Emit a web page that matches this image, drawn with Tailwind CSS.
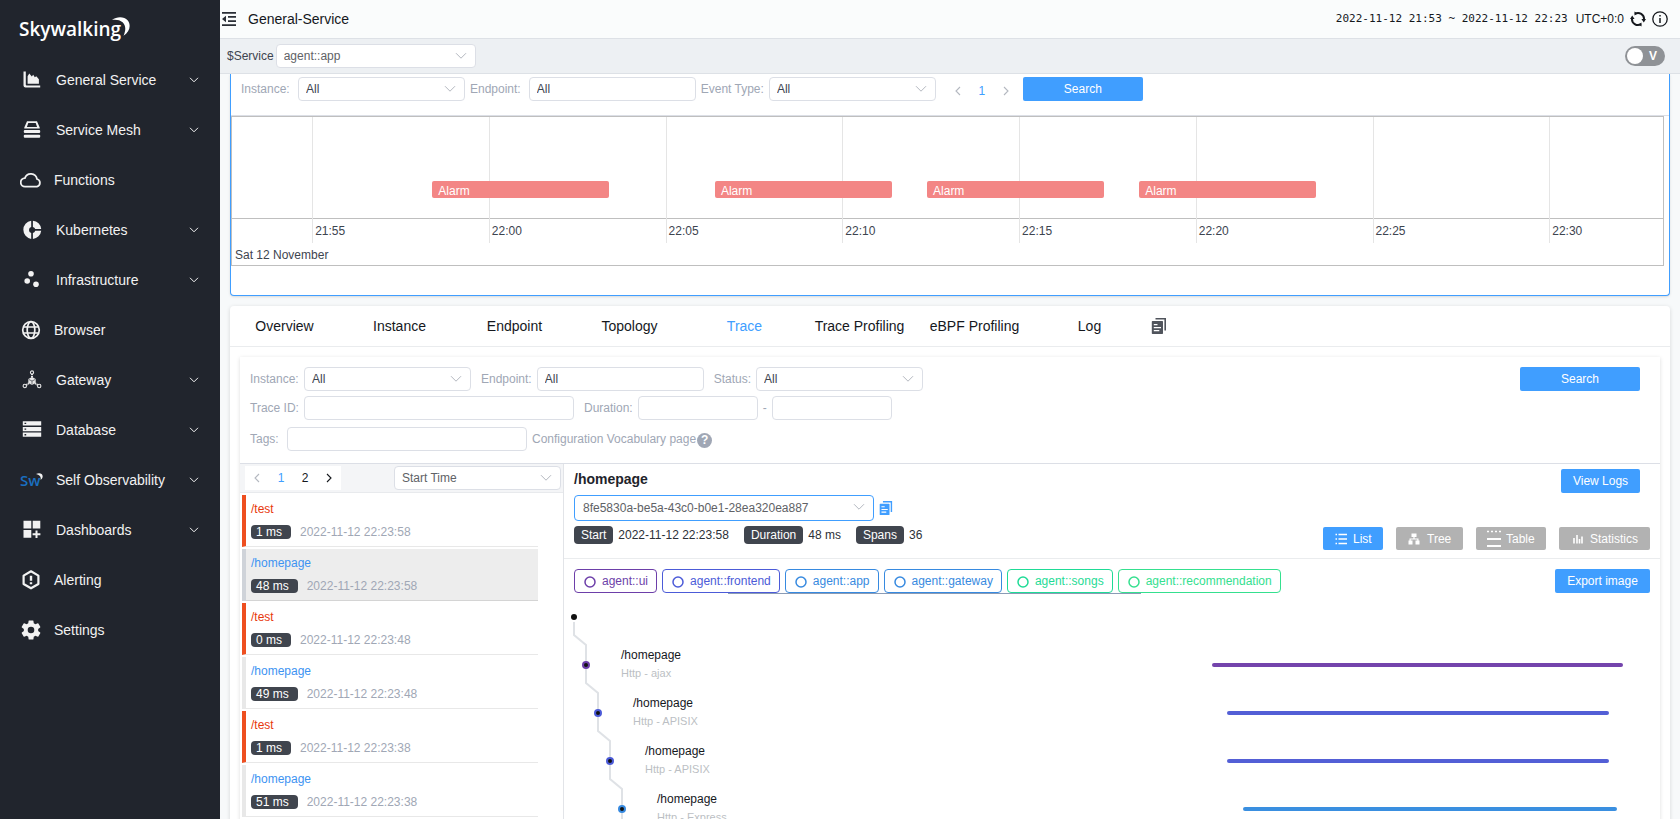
<!DOCTYPE html>
<html lang="en">
<head>
<meta charset="utf-8">
<title>General-Service</title>
<script src="https://cdn.jsdelivr.net/npm/@tailwindcss/browser@4"></script>
</head>
<body class="flex h-screen overflow-hidden bg-[#f7f9fa] font-['Liberation_Sans',Arial,sans-serif] text-xs text-[#3d444f]">

<svg class="hidden">
  <symbol id="down" viewBox="0 0 12 8"><path d="M1 1.200l5 5 5-5" fill="none" stroke="currentColor" stroke-width="1"/></symbol>
  <symbol id="menudown" viewBox="0 0 10 6"><path d="M1 .8l4 4 4-4" fill="none" stroke="currentColor" stroke-width="1"/></symbol>
  <symbol id="prev" viewBox="0 0 8 12"><path d="M6 2L2 6l4 4" fill="none" stroke="currentColor" stroke-width="1.100"/></symbol>
  <symbol id="next" viewBox="0 0 8 12"><path d="M2 2l4 4-4 4" fill="none" stroke="currentColor" stroke-width="1.100"/></symbol>
  <symbol id="copy" viewBox="0 0 16 18"><path d="M4.500 1H15v12.500h-1.600V2.600H4.500z" fill="currentColor"/><path fill-rule="evenodd" d="M1.500 4h9.800q.7 0 .7.700v11.600q0 .7-.7.700H1.500q-.7 0-.7-.7V4.700q0-.7.7-.7zM2.800 7v1.200h3.700V7zm0 3v1.300h7.200V10zm0 3v1.300h5.500V13z" fill="currentColor"/></symbol>
</svg>

<nav class="flex w-[220px] shrink-0 flex-col bg-[#21252d] text-sm text-[#f2f2f2]">
  <a href="#" aria-label="Skywalking" class="relative flex h-[55px] items-center pt-1 pl-[19px] font-['Open_Sans',sans-serif] text-[19px] font-semibold text-white">Skywalking
    <svg class="absolute top-4 left-[111px] size-5" viewBox="0 0 20 20"><path d="M1 4C6 .2 13 .2 16.800 4.500c3.600 4.700 1.800 11.500-4.300 15.200C15 14.500 15 9.500 11.600 6.300 9 4 5 3.400 1 4z" fill="#fff"/></svg>
  </a>
  <a href="#" class="flex h-[50px] items-center pr-[21px] pl-[22px]"><svg class="mr-[14px] size-5" viewBox="0 0 20 20" fill="#f2f2f2"><path d="M1.500 1.500h2.300v13.300q0 .8.900.8h13.500v2H3.600q-2.100 0-2.100-2z"/><path d="M5.600 13.800V6.200l1.700-2.700 2.500 3 1.400-1.700 1.600 2.500 1.500-1 2.600 3v4.500z"/></svg><span class="flex-1">General Service</span><svg class="h-[6px] w-[10px]"><use href="#menudown"/></svg></a>
  <a href="#" class="flex h-[50px] items-center pr-[21px] pl-[22px]"><svg class="mr-[14px] size-5" viewBox="0 0 20 20" fill="#f2f2f2"><path fill-rule="evenodd" d="M5 1.200h10l2.700 6.300v1H2.300v-1zM6.300 2.900L4.900 6.900h10.200l-1.400-4z"/><rect x="1.800" y="10" width="16.400" height="3" rx="1"/><rect x="1.800" y="14.700" width="16.400" height="3" rx="1"/></svg><span class="flex-1">Service Mesh</span><svg class="h-[6px] w-[10px]"><use href="#menudown"/></svg></a>
  <a href="#" class="flex h-[50px] items-center pr-5 pl-5"><svg class="mr-3 h-5 w-[22px]" viewBox="0 0 22 20"><path d="M5.200 16.700a4.300 4.300 0 0 1-.3-8.600A6.300 6.300 0 0 1 17 9a4 4 0 0 1 0 7.700z" fill="none" stroke="#f2f2f2" stroke-width="1.800"/></svg>Functions</a>
  <a href="#" class="flex h-[50px] items-center pr-[21px] pl-[22px]"><svg class="mr-[14px] size-5" viewBox="0 0 20 20" fill="#f2f2f2"><path d="M9.200.7a9.200 9.200 0 0 0 0 18.200V13a3.200 3.200 0 0 1 0-6.100zM10.900.7v6.200q1.800.5 2.300 2.100h6A9.200 9.200 0 0 0 10.900.7zM10.900 18.900V13q1.800-.5 2.300-2.300h6a9.200 9.200 0 0 1-8.300 8.200z"/></svg><span class="flex-1">Kubernetes</span><svg class="h-[6px] w-[10px]"><use href="#menudown"/></svg></a>
  <a href="#" class="flex h-[50px] items-center pr-[21px] pl-[22px]"><svg class="mr-[14px] size-5" viewBox="0 0 20 20" fill="#f2f2f2"><circle cx="9" cy="3.700" r="2.800"/><circle cx="5.200" cy="11" r="2.800"/><circle cx="14" cy="14.300" r="2.800"/></svg><span class="flex-1">Infrastructure</span><svg class="h-[6px] w-[10px]"><use href="#menudown"/></svg></a>
  <a href="#" class="flex h-[50px] items-center pr-5 pl-[21px]"><svg class="mr-[13px] size-5" viewBox="0 0 20 20" fill="none" stroke="#f2f2f2" stroke-width="1.700"><circle cx="10" cy="10" r="8.300"/><ellipse cx="10" cy="10" rx="3.800" ry="8.300"/><path d="M2.500 7h15M2.500 13h15"/></svg>Browser</a>
  <a href="#" class="flex h-[50px] items-center pr-[21px] pl-[22px]"><svg class="mr-[14px] size-5" viewBox="0 0 20 20" fill="none" stroke="#e6e6e6" stroke-width="1.100"><circle cx="10" cy="2.500" r="1.600"/><circle cx="2.800" cy="16" r="1.700"/><circle cx="17.200" cy="16" r="1.700"/><path d="M10 4v4M4.300 15l3-2M15.700 15l-3-2" stroke-width="2" stroke-dasharray="1.300 .6"/><path d="M10 7l3.700 2v4L10 15l-3.700-2V9z" fill="#e6e6e6" stroke="none"/><path d="M6.800 9.500L10 11l3.200-1.500M10 11v3.500" stroke="#21252d" stroke-width=".6"/></svg><span class="flex-1">Gateway</span><svg class="h-[6px] w-[10px]"><use href="#menudown"/></svg></a>
  <a href="#" class="flex h-[50px] items-center pr-[21px] pl-[22px]"><svg class="mr-[14px] size-5" viewBox="0 0 20 20"><path d="M.8 1.200h18.400v4.300H.8zM.8 6.900h18.400v4.300H.8zM.8 12.500h18.400v4.300H.8z" fill="#f2f2f2"/><path d="M2.500 2.700h1.700v1.400H2.500zM2.500 8.400h1.700v1.400H2.500zM2.500 14h1.700v1.400H2.500z" fill="#21252d"/></svg><span class="flex-1">Database</span><svg class="h-[6px] w-[10px]"><use href="#menudown"/></svg></a>
  <a href="#" class="flex h-[50px] items-center pr-[21px] pl-5"><span class="relative w-9 font-['Open_Sans',sans-serif] text-[15px] leading-5 font-semibold text-[#1a6fc0]">Sw<svg class="absolute top-[3px] left-[16px] size-[7px]" viewBox="0 0 10 10"><path d="M0 1.500C5-1 10 1 9.500 5.500 9 8 8 9 6.500 10 7.500 6 6 3 0 1.500z" fill="#f2f2f2"/></svg></span><span class="flex-1">Self Observability</span><svg class="h-[6px] w-[10px]"><use href="#menudown"/></svg></a>
  <a href="#" class="flex h-[50px] items-center pr-[21px] pl-[22px]"><svg class="mr-[14px] size-5" viewBox="0 0 20 20" fill="#f2f2f2"><path d="M1.500.8h7.800v7.800H1.500zM10.700.8h7.600v7.800h-7.600zM1.500 10h7.800v7.800H1.500zM13.500 10.500h2v2.800h2.900v2h-2.900v2.800h-2v-2.800h-2.900v-2h2.900z"/></svg><span class="flex-1">Dashboards</span><svg class="h-[6px] w-[10px]"><use href="#menudown"/></svg></a>
  <a href="#" class="flex h-[50px] items-center pr-5 pl-[21px]"><svg class="mr-[13px] size-5" viewBox="0 0 20 20" fill="none" stroke="#f2f2f2"><path d="M10 1.300l7.400 4.300v8.400L10 18.300l-7.400-4.300V5.600z" stroke-width="2.200" stroke-linejoin="round"/><path d="M10 5.800v5M10 12.300v2" stroke-width="2.400"/></svg>Alerting</a>
  <a href="#" class="flex h-[50px] items-center pr-5 pl-[21px]"><svg class="mr-[13px] size-5" viewBox="2 2 20 20" fill="#f2f2f2"><path d="M19.140 12.940c.04-.3.060-.61.060-.94 0-.32-.02-.64-.07-.94l2.030-1.580a.49.490 0 0 0 .12-.61l-1.920-3.320a.49.490 0 0 0-.59-.22l-2.390.96a7 7 0 0 0-1.620-.94l-.36-2.540a.48.480 0 0 0-.48-.41h-3.840a.48.480 0 0 0-.47.410l-.36 2.540a7 7 0 0 0-1.620.94l-2.390-.96a.48.480 0 0 0-.59.220L2.740 8.870a.48.480 0 0 0 .12.610l2.030 1.580a6 6 0 0 0 0 1.880l-2.030 1.580a.49.490 0 0 0-.12.610l1.920 3.320c.12.220.37.290.59.220l2.390-.96c.5.380 1.030.7 1.620.94l.36 2.540c.05.240.24.410.48.410h3.840c.24 0 .44-.17.470-.41l.36-2.540a7 7 0 0 0 1.620-.94l2.390.96c.22.080.47 0 .59-.22l1.920-3.320a.48.480 0 0 0-.12-.61zM12 15.300a3.300 3.300 0 1 1 0-6.600 3.300 3.300 0 0 1 0 6.600z"/></svg>Settings</a>
</nav>

<div class="flex min-w-0 flex-1 flex-col">
  <header class="flex h-[38px] shrink-0 items-center bg-[#fafcfc] pr-3 pl-[2px] text-[#15181d]">
    <button aria-label="Collapse menu" class="mr-3"><svg class="size-[14px]" viewBox="0 0 14 14"><path d="M0 0h14v1.700H0zM6 4.100h8v1.700H6zM6 8.200h8v1.700H6zM0 12.300h14V14H0zM4 3.700v6.600L0 7z" fill="#2a2e36"/></svg></button>
    <h1 class="flex-1 text-sm">General-Service</h1>
    <span class="mr-2 font-['DejaVu_Sans_Mono',monospace] text-[11px]">2022-11-12 21:53 ~ 2022-11-12 22:23</span>
    <span>UTC+0:0</span>
    <button aria-label="Reload" class="mx-[6px]"><svg class="size-4" viewBox="0 0 16 16" fill="none" stroke="#15181d" stroke-width="2"><path d="M5 2.800A6 6 0 0 1 14 8.500M11 13.200A6 6 0 0 1 2 7.500"/><path d="M11.400 8H16L13.800 11.500zM0 8h4.600L2.200 4.500zM4.500.5v4L7.500 2.500zM11.500 15.500v-4L8.500 13.500z" fill="#15181d" stroke="none"/></svg></button>
    <button aria-label="About"><svg class="size-4" viewBox="0 0 16 16" fill="none" stroke="#15181d" stroke-width="1.300"><circle cx="8" cy="8" r="7.200"/><path d="M8 7v5M8 4v1.600" stroke-width="1.500"/></svg></button>
  </header>

  <div class="flex h-9 shrink-0 items-center border-y border-[#dde1e6] bg-[#edf0f3] pr-[15px] pl-[7px]">
    <label for="svc" class="mr-[2px]">$Service</label>
    <span class="relative"><select id="svc" class="block h-6 w-[200px] appearance-none rounded-sm border border-[#dcdfe6] bg-white pl-[7px] text-[#606266]"><option>agent::app</option></select><svg class="pointer-events-none absolute top-2 right-[9px] h-2 w-3 text-[#b4b8c0]"><use href="#down"/></svg></span>
    <label class="relative ml-auto flex h-5 w-10 items-center rounded-full bg-[#8f9296] p-[2px] text-xs font-bold text-white"><input type="checkbox" aria-label="View mode" class="size-4 appearance-none rounded-full bg-white"><span class="ml-[6px]">V</span></label>
  </div>

  <main class="flex-1 overflow-hidden pr-[10px] pl-[10px]">
    <section class="rounded-b-sm border-x border-b border-[#409eff] bg-white shadow-sm">
      <div class="flex h-[42px] items-start gap-[5px] border-b border-[#dcdfe6] pt-[3px] pl-[10px] text-[#a0a7b5]">
        <label for="ev-inst" class="mr-[3px] w-[49px] leading-6">Instance:</label>
        <span class="relative"><select id="ev-inst" class="block h-6 w-[167px] appearance-none rounded-sm border border-[#dcdfe6] bg-white pl-[7px] text-[#3d444f]"><option>All</option></select><svg class="pointer-events-none absolute top-2 right-[9px] h-2 w-3 text-[#b4b8c0]"><use href="#down"/></svg></span>
        <label for="ev-end" class="mr-[3px] leading-6">Endpoint:</label>
        <input id="ev-end" value="All" class="h-6 w-[167px] rounded-sm border border-[#dcdfe6] pl-[7px] text-[#3d444f]">
        <label for="ev-type" class="leading-6">Event Type:</label>
        <span class="relative"><select id="ev-type" class="block h-6 w-[167px] appearance-none rounded-sm border border-[#dcdfe6] bg-white pl-[7px] text-[#3d444f]"><option>All</option></select><svg class="pointer-events-none absolute top-2 right-[9px] h-2 w-3 text-[#b4b8c0]"><use href="#down"/></svg></span>
        <span class="ml-[5px] flex h-7 items-center">
          <button aria-label="Previous" class="flex w-6 justify-center text-[#b4b8c0]"><svg class="h-3 w-2"><use href="#prev"/></svg></button>
          <button class="w-6 text-[#409eff]">1</button>
          <button aria-label="Next" class="flex w-6 justify-center text-[#b4b8c0]"><svg class="h-3 w-2"><use href="#next"/></svg></button>
        </span>
        <button class="h-6 w-[120px] rounded-xs bg-[#409eff] text-white">Search</button>
      </div>
      <!-- Event timeline: positions are percentages of the visible time window -->
      <div class="mr-[5px] mb-[29px] border border-[#bfbfbf]">
        <div class="relative h-[148px] overflow-hidden">
          <div class="h-[102px] border-b border-[#bfbfbf]"></div>
          <div class="absolute top-0 h-[126px] border-l border-[#e5e5e5]" style="left:5.600%"><span class="block pt-[106px] pl-[2px] leading-4">21:55</span></div>
          <div class="absolute top-0 h-[126px] border-l border-[#e5e5e5]" style="left:17.950%"><span class="block pt-[106px] pl-[2px] leading-4">22:00</span></div>
          <div class="absolute top-0 h-[126px] border-l border-[#e5e5e5]" style="left:30.300%"><span class="block pt-[106px] pl-[2px] leading-4">22:05</span></div>
          <div class="absolute top-0 h-[126px] border-l border-[#e5e5e5]" style="left:42.650%"><span class="block pt-[106px] pl-[2px] leading-4">22:10</span></div>
          <div class="absolute top-0 h-[126px] border-l border-[#e5e5e5]" style="left:55%"><span class="block pt-[106px] pl-[2px] leading-4">22:15</span></div>
          <div class="absolute top-0 h-[126px] border-l border-[#e5e5e5]" style="left:67.350%"><span class="block pt-[106px] pl-[2px] leading-4">22:20</span></div>
          <div class="absolute top-0 h-[126px] border-l border-[#e5e5e5]" style="left:79.700%"><span class="block pt-[106px] pl-[2px] leading-4">22:25</span></div>
          <div class="absolute top-0 h-[126px] border-l border-[#e5e5e5]" style="left:92.050%"><span class="block pt-[106px] pl-[2px] leading-4">22:30</span></div>
          <div class="absolute top-16 h-[17px] rounded-xs bg-[#f38685] pl-[6px] leading-5 text-white" style="left:14%;width:12.350%">Alarm</div>
          <div class="absolute top-16 h-[17px] rounded-xs bg-[#f38685] pl-[6px] leading-5 text-white" style="left:33.750%;width:12.350%">Alarm</div>
          <div class="absolute top-16 h-[17px] rounded-xs bg-[#f38685] pl-[6px] leading-5 text-white" style="left:48.570%;width:12.350%">Alarm</div>
          <div class="absolute top-16 h-[17px] rounded-xs bg-[#f38685] pl-[6px] leading-5 text-white" style="left:63.400%;width:12.350%">Alarm</div>
          <span class="absolute top-[130px] left-[3px] leading-4">Sat 12 November</span>
        </div>
      </div>
    </section>

    <section class="mt-[10px] flex h-[600px] flex-col rounded-sm bg-white shadow-[0_1px_4px_rgba(0,0,0,0.14)]">
      <div class="flex h-[41px] shrink-0 items-center border-b border-[#eaecee] text-sm whitespace-nowrap text-[#15181d]">
        <a href="#" class="-ml-[3px] w-[115px] text-center">Overview</a>
        <a href="#" class="w-[115px] text-center">Instance</a>
        <a href="#" class="w-[115px] text-center">Endpoint</a>
        <a href="#" class="w-[115px] text-center">Topology</a>
        <a href="#" class="w-[115px] text-center text-[#409eff]">Trace</a>
        <a href="#" class="w-[115px] text-center">Trace Profiling</a>
        <a href="#" class="w-[115px] text-center">eBPF Profiling</a>
        <a href="#" class="w-[115px] text-center">Log</a>
        <button aria-label="Copy" class="ml-1 text-[#50545c]"><svg class="h-[18px] w-4"><use href="#copy"/></svg></button>
      </div>

      <div class="mx-[10px] mt-[10px] flex flex-1 flex-col bg-white shadow-[0_1px_4px_rgba(0,0,0,0.14)]">
        <form class="flex h-[107px] shrink-0 flex-col border-b border-[#dcdfe6] pt-[10px] pr-5 pl-[10px] text-[#a0a7b5]" onsubmit="return false">
          <div class="flex items-center">
            <label for="t-inst" class="w-[54px]">Instance:</label>
            <span class="relative"><select id="t-inst" class="block h-6 w-[167px] appearance-none rounded-sm border border-[#dcdfe6] bg-white pl-[7px] text-[#3d444f]"><option>All</option></select><svg class="pointer-events-none absolute top-2 right-[9px] h-2 w-3 text-[#b4b8c0]"><use href="#down"/></svg></span>
            <label for="t-end" class="mr-[5px] ml-[10px]">Endpoint:</label>
            <input id="t-end" value="All" class="h-6 w-[167px] rounded-sm border border-[#dcdfe6] pl-[7px] text-[#3d444f]">
            <label for="t-status" class="mr-[5px] ml-[10px]">Status:</label>
            <span class="relative"><select id="t-status" class="block h-6 w-[167px] appearance-none rounded-sm border border-[#dcdfe6] bg-white pl-[7px] text-[#3d444f]"><option>All</option></select><svg class="pointer-events-none absolute top-2 right-[9px] h-2 w-3 text-[#b4b8c0]"><use href="#down"/></svg></span>
            <button class="ml-auto h-6 w-[120px] rounded-xs bg-[#409eff] text-white">Search</button>
          </div>
          <div class="mt-[5px] flex items-center">
            <label for="t-id" class="w-[54px]">Trace ID:</label>
            <input id="t-id" class="h-6 w-[270px] rounded-sm border border-[#dcdfe6]">
            <label for="t-dur" class="mr-[5px] ml-[10px]">Duration:</label>
            <input id="t-dur" class="h-6 w-[120px] rounded-sm border border-[#dcdfe6]">
            <span class="mx-[5px]">-</span>
            <input aria-label="Maximum duration" class="h-6 w-[120px] rounded-sm border border-[#dcdfe6]">
          </div>
          <div class="mt-[7px] flex items-center">
            <label for="t-tags" class="w-[37px]">Tags:</label>
            <input id="t-tags" class="h-6 w-[240px] rounded-sm border border-[#dcdfe6]">
            <a href="#" class="ml-[5px] flex items-center gap-px">Configuration Vocabulary page<span class="mt-[2px] flex size-[15px] items-center justify-center rounded-full bg-[#a0a7b5] font-bold text-white">?</span></a>
          </div>
        </form>

        <div class="flex flex-1">
          <div class="w-[324px] shrink-0 border-r border-[#e2e4e8]">
            <div class="flex h-[29px] items-center justify-between border-b border-[#e8eaed] bg-[#f4f5f7] pr-[2px] pl-[5px]">
              <span class="flex h-6 items-center bg-white text-[#15181d]">
                <button aria-label="Previous" class="flex w-6 justify-center text-[#b4b8c0]"><svg class="h-3 w-2"><use href="#prev"/></svg></button>
                <button class="w-6 text-[#409eff]">1</button>
                <button class="w-6">2</button>
                <button aria-label="Next" class="flex w-6 justify-center"><svg class="h-3 w-2"><use href="#next"/></svg></button>
              </span>
              <span class="relative"><select aria-label="Sort order" class="block h-6 w-[167px] appearance-none rounded-sm border border-[#dcdfe6] bg-white pl-[7px] text-[#606266]"><option>Start Time</option></select><svg class="pointer-events-none absolute top-2 right-[9px] h-2 w-3 text-[#b4b8c0]"><use href="#down"/></svg></span>
            </div>
            <ul class="mt-[2px] ml-[2px] flex w-[296px] flex-col gap-[2px]">
              <li class="h-[52px] border-b border-l-4 border-b-[#e8e8e8] border-l-[#ee4f20] pt-[5px] pl-[5px]"><a href="#" class="block leading-[18px] text-[#e8380d]">/test</a><div class="mt-[7px] flex items-center leading-[14px]"><span class="rounded-sm bg-[#40454e] pr-[9px] pl-[5px] text-white">1 ms</span><span class="ml-[9px] text-[#a0a7b5]">2022-11-12 22:23:58</span></div></li>
              <li class="h-[52px] border-b border-l-4 border-b-[#d4d4d4] border-l-[#cfd3d9] bg-[#ededed] pt-[5px] pl-[5px]"><a href="#" class="block leading-[18px] text-[#3d93f2]">/homepage</a><div class="mt-[7px] flex items-center leading-[14px]"><span class="rounded-sm bg-[#40454e] pr-[9px] pl-[5px] text-white">48 ms</span><span class="ml-[9px] text-[#a0a7b5]">2022-11-12 22:23:58</span></div></li>
              <li class="h-[52px] border-b border-l-4 border-b-[#e8e8e8] border-l-[#ee4f20] pt-[5px] pl-[5px]"><a href="#" class="block leading-[18px] text-[#e8380d]">/test</a><div class="mt-[7px] flex items-center leading-[14px]"><span class="rounded-sm bg-[#40454e] pr-[9px] pl-[5px] text-white">0 ms</span><span class="ml-[9px] text-[#a0a7b5]">2022-11-12 22:23:48</span></div></li>
              <li class="h-[52px] border-b border-l-4 border-b-[#e8e8e8] border-l-[#e8e8e8] pt-[5px] pl-[5px]"><a href="#" class="block leading-[18px] text-[#3d93f2]">/homepage</a><div class="mt-[7px] flex items-center leading-[14px]"><span class="rounded-sm bg-[#40454e] pr-[9px] pl-[5px] text-white">49 ms</span><span class="ml-[9px] text-[#a0a7b5]">2022-11-12 22:23:48</span></div></li>
              <li class="h-[52px] border-b border-l-4 border-b-[#e8e8e8] border-l-[#ee4f20] pt-[5px] pl-[5px]"><a href="#" class="block leading-[18px] text-[#e8380d]">/test</a><div class="mt-[7px] flex items-center leading-[14px]"><span class="rounded-sm bg-[#40454e] pr-[9px] pl-[5px] text-white">1 ms</span><span class="ml-[9px] text-[#a0a7b5]">2022-11-12 22:23:38</span></div></li>
              <li class="h-[52px] border-b border-l-4 border-b-[#e8e8e8] border-l-[#e8e8e8] pt-[5px] pl-[5px]"><a href="#" class="block leading-[18px] text-[#3d93f2]">/homepage</a><div class="mt-[7px] flex items-center leading-[14px]"><span class="rounded-sm bg-[#40454e] pr-[9px] pl-[5px] text-white">51 ms</span><span class="ml-[9px] text-[#a0a7b5]">2022-11-12 22:23:38</span></div></li>
            </ul>
          </div>

          <div class="min-w-0 flex-1">
            <div class="border-b border-[#eaecee] pt-[5px] pr-[10px] pb-2 pl-[10px]">
              <div class="flex items-start justify-between pr-[10px]">
                <h2 class="text-sm leading-5 font-bold text-[#1f242b]">/homepage</h2>
                <button class="h-6 w-[79px] rounded-xs bg-[#409eff] text-white">View Logs</button>
              </div>
              <div class="mt-[2px] flex items-center">
                <span class="relative"><select aria-label="Trace ID" class="block h-[26px] w-[300px] appearance-none rounded-sm border border-[#409eff] bg-white pl-2 text-[#606266]"><option>8fe5830a-be5a-43c0-b0e1-28ea320ea887</option></select><svg class="pointer-events-none absolute top-2 right-[9px] h-2 w-3 text-[#b4b8c0]"><use href="#down"/></svg></span>
                <button aria-label="Copy trace ID" class="ml-[5px] text-[#409eff]"><svg class="h-4 w-[14px]"><use href="#copy"/></svg></button>
              </div>
              <div class="mt-[5px] flex items-start leading-[18px] text-[#2c3037]">
                <span class="mr-[5px] rounded-sm bg-[#40454e] px-[7px] text-white">Start</span>2022-11-12 22:23:58
                <span class="mr-[5px] ml-[15px] rounded-sm bg-[#40454e] px-[7px] text-white">Duration</span>48 ms
                <span class="mr-[5px] ml-[15px] rounded-sm bg-[#40454e] px-[7px] text-white">Spans</span>36
                <div class="mt-px ml-auto flex gap-[13px] text-white">
                  <button class="flex h-[23px] w-[60px] items-center rounded-xs bg-[#409eff] pl-3"><svg class="mr-[6px] size-3" viewBox="0 0 12 12"><path d="M3.500 1.500H12M3.500 6H12M3.500 10.500H12M.5 1.500H2M.5 6H2M.5 10.500H2" stroke="#fff" stroke-width="1.300"/></svg>List</button>
                  <button class="flex h-[23px] w-[67px] items-center rounded-xs bg-[#b2b2b2] pl-3"><svg class="mr-[7px] size-3" viewBox="0 0 12 12" fill="#fff"><path d="M3.500.5h5v3.500h-5zM5.400 4h1.200v1.500h3.900V8H9.300V6.600H2.700V8H1.500V5.500h3.900zM.5 7.500h4V11.500h-4zM7.500 7.500h4V11.500h-4z"/></svg>Tree</button>
                  <button class="flex h-[23px] w-[70px] items-center rounded-xs bg-[#b2b2b2] pl-[11px]"><svg class="mr-[5px] h-[18px] w-[14px]" viewBox="0 0 14 18" stroke="#fff"><path d="M0 1.500h14" stroke-width="1.500" stroke-dasharray="2 2"/><path d="M0 9h14M0 16h14" stroke-width="2"/></svg>Table</button>
                  <button class="flex h-[23px] w-[91px] items-center rounded-xs bg-[#b2b2b2] pl-[14px]"><svg class="mr-[7px] size-[10px]" viewBox="0 0 10 10"><path d="M1 4v5.500M4 1v8.500M6.500 5v4.500M9 2.500v7" stroke="#fff" stroke-width="1.600"/></svg>Statistics</button>
                </div>
              </div>
            </div>

            <div class="pt-px pr-[10px] pl-[10px]">
              <div class="relative flex items-center gap-[5px] pt-[9px]">
                <span class="flex h-6 items-center gap-[6px] rounded-sm border border-[#6d3fa9] pr-2 pl-[9px] text-[#6d3fa9]"><svg class="mt-px size-3" viewBox="0 0 12 12"><circle cx="6" cy="6" r="5" fill="none" stroke="currentColor" stroke-width="1.500"/></svg>agent::ui</span>
                <span class="flex h-6 items-center gap-[6px] rounded-sm border border-[#4c5bd8] pr-2 pl-[9px] text-[#4c5bd8]"><svg class="mt-px size-3" viewBox="0 0 12 12"><circle cx="6" cy="6" r="5" fill="none" stroke="currentColor" stroke-width="1.500"/></svg>agent::frontend</span>
                <span class="flex h-6 items-center gap-[6px] rounded-sm border border-[#378ae0] pr-2 pl-[9px] text-[#378ae0]"><svg class="mt-px size-3" viewBox="0 0 12 12"><circle cx="6" cy="6" r="5" fill="none" stroke="currentColor" stroke-width="1.500"/></svg>agent::app</span>
                <span class="flex h-6 items-center gap-[6px] rounded-sm border border-[#378ae0] pr-2 pl-[9px] text-[#378ae0]"><svg class="mt-px size-3" viewBox="0 0 12 12"><circle cx="6" cy="6" r="5" fill="none" stroke="currentColor" stroke-width="1.500"/></svg>agent::gateway</span>
                <span class="flex h-6 items-center gap-[6px] rounded-sm border border-[#1fdb96] pr-2 pl-[9px] text-[#1fdb96]"><svg class="mt-px size-3" viewBox="0 0 12 12"><circle cx="6" cy="6" r="5" fill="none" stroke="currentColor" stroke-width="1.500"/></svg>agent::songs</span>
                <span class="flex h-6 items-center gap-[6px] rounded-sm border border-[#35e08f] pr-2 pl-[9px] text-[#35e08f]"><svg class="mt-px size-3" viewBox="0 0 12 12"><circle cx="6" cy="6" r="5" fill="none" stroke="currentColor" stroke-width="1.500"/></svg>agent::recommendation</span>
                <span class="absolute top-full left-[154px] h-px w-[413px] bg-[#8a9bb5]"></span>
                <button class="ml-auto h-6 w-[95px] rounded-xs bg-[#409eff] text-white">Export image</button>
              </div>

              <!-- Span tree: each level steps 12px right and 48px down -->
              <div class="relative pt-12">
                <svg class="absolute top-5 -left-1 h-[220px] w-[70px]" viewBox="0 0 70 220">
                  <g fill="none" stroke="#dfe2e6" stroke-width="2"><path d="M4 9v13l12 10v38l12 10v38l12 10v38l12 10v50"/></g>
                  <circle cx="4" cy="4" r="3" fill="#111"/>
                  <g fill="#111" stroke-width="2"><circle cx="16" cy="52" r="3" stroke="#6d3fa9"/><circle cx="28" cy="100" r="3" stroke="#4c5bd8"/><circle cx="40" cy="148" r="3" stroke="#4c5bd8"/><circle cx="52" cy="196" r="3" stroke="#378ae0"/></g>
                </svg>
                <div class="flex h-12 items-center pr-[27px] pl-[47px]"><div class="flex-1 pb-[2px] leading-[18px] text-[#15181d]">/homepage<p class="text-[11px] text-[#bcbfc4]">Http - ajax</p></div><div class="w-[411px]"><div class="h-1 rounded-full bg-[#7444ac]"></div></div></div>
                <div class="flex h-12 items-center pr-[27px] pl-[59px]"><div class="flex-1 pb-[2px] leading-[18px] text-[#15181d]">/homepage<p class="text-[11px] text-[#bcbfc4]">Http - APISIX</p></div><div class="w-[411px]"><div class="h-1 rounded-full bg-[#535fd6]" style="margin-left:3.700%;width:93%"></div></div></div>
                <div class="flex h-12 items-center pr-[27px] pl-[71px]"><div class="flex-1 pb-[2px] leading-[18px] text-[#15181d]">/homepage<p class="text-[11px] text-[#bcbfc4]">Http - APISIX</p></div><div class="w-[411px]"><div class="h-1 rounded-full bg-[#535fd6]" style="margin-left:3.700%;width:93%"></div></div></div>
                <div class="flex h-12 items-center pr-[27px] pl-[83px]"><div class="flex-1 pb-[2px] leading-[18px] text-[#15181d]">/homepage<p class="text-[11px] text-[#bcbfc4]">Http - Express</p></div><div class="w-[411px]"><div class="h-1 rounded-full bg-[#3a8fe0]" style="margin-left:7.500%;width:91%"></div></div></div>
              </div>
            </div>
          </div>
        </div>
      </div>
    </section>
  </main>
</div>
</body>
</html>
